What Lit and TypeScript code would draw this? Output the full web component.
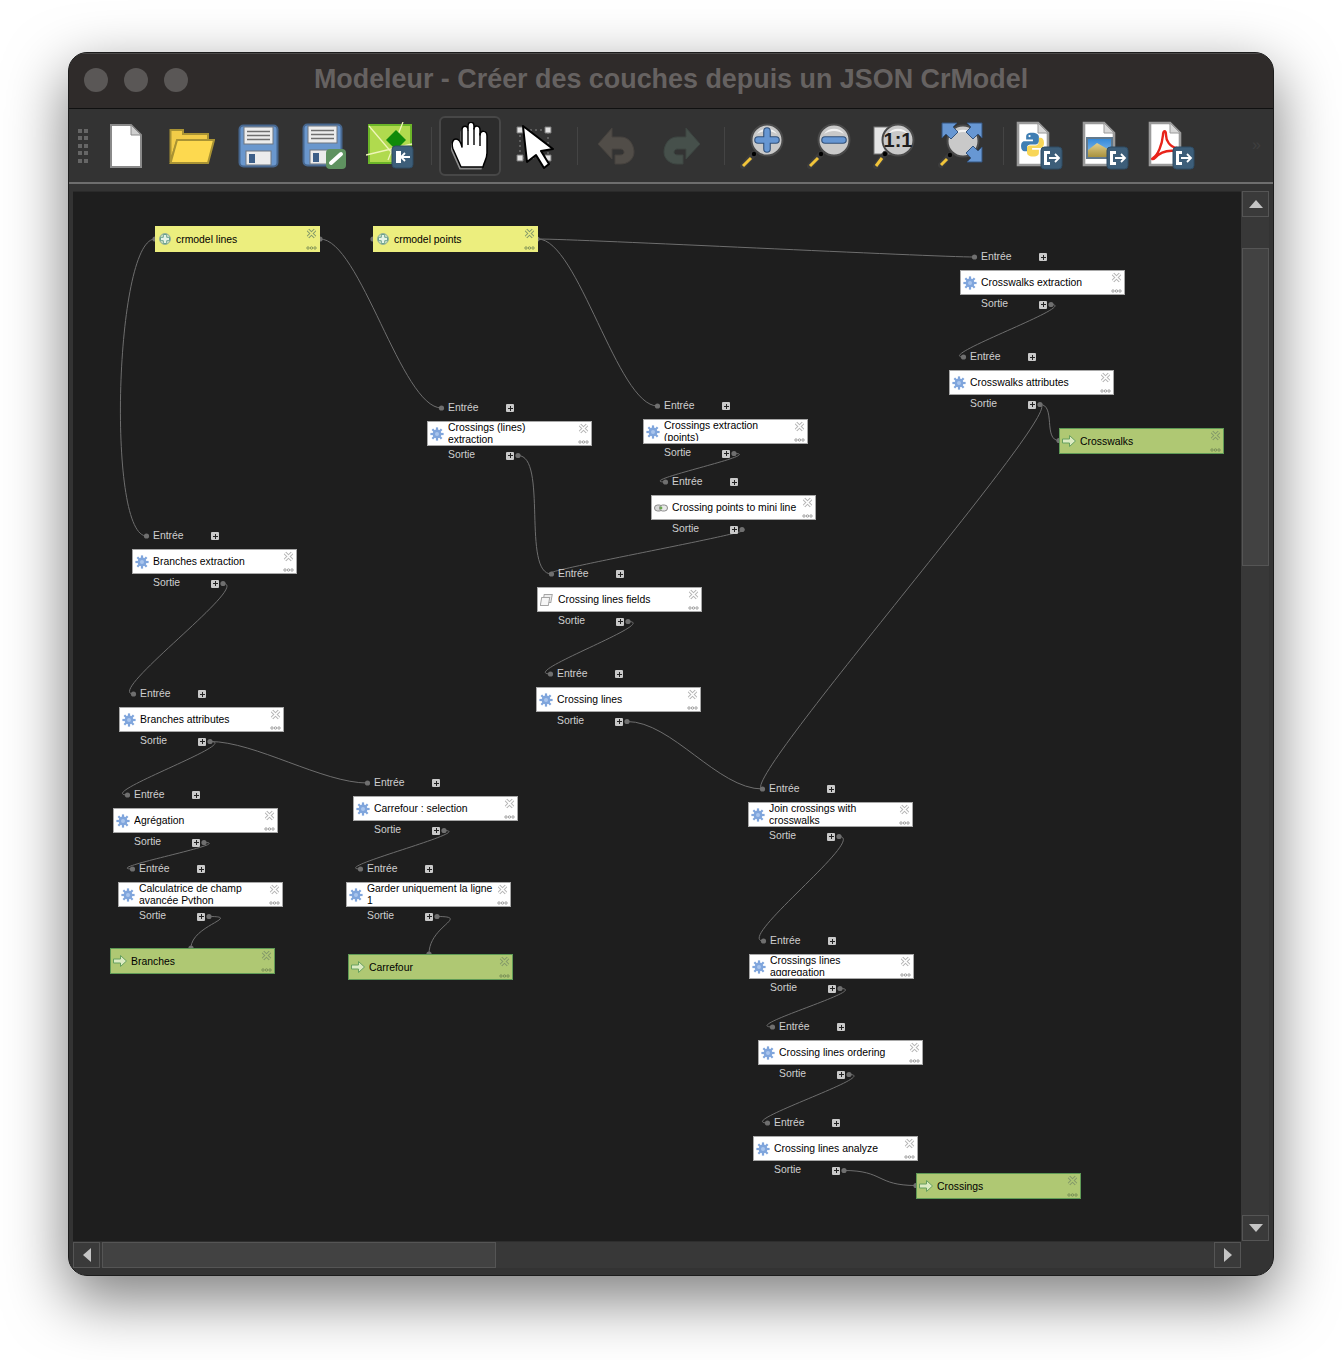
import { LitElement, css, html, svg } from 'lit';
import { customElement } from 'lit/decorators.js';

// canvas origin in page coordinates, node data below is in page coordinates
const OX = 73;
const OY = 192;

type Kind = 'model' | 'input' | 'output';
type Icon = 'gear' | 'plus' | 'arrow' | 'link' | 'fields';

interface GraphNode {
    id: string;
    x: number;
    y: number;
    label: string;
    kind: Kind;
    icon: Icon;
}

const model = (id: string, x: number, y: number, label: string, icon: Icon = 'gear'): GraphNode =>
    ({ id, x, y, label, kind: 'model', icon });

const NODES: GraphNode[] = [
    { id: 'lines', x: 155, y: 226, label: 'crmodel lines', kind: 'input', icon: 'plus' },
    { id: 'points', x: 373, y: 226, label: 'crmodel points', kind: 'input', icon: 'plus' },
    model('cwExt', 960, 270, 'Crosswalks extraction'),
    model('cwAttr', 949, 370, 'Crosswalks attributes'),
    { id: 'cwOut', x: 1059, y: 428, label: 'Crosswalks', kind: 'output', icon: 'arrow' },
    model('clExt', 427, 421, 'Crossings (lines)\nextraction'),
    model('cpExt', 643, 419, 'Crossings extraction\n(points)'),
    model('cpMini', 651, 495, 'Crossing points to mini line', 'link'),
    model('clFields', 537, 587, 'Crossing lines fields', 'fields'),
    model('cl', 536, 687, 'Crossing lines'),
    model('brExt', 132, 549, 'Branches extraction'),
    model('brAttr', 119, 707, 'Branches attributes'),
    model('agg', 113, 808, 'Agrégation'),
    model('carSel', 353, 796, 'Carrefour : selection'),
    model('calc', 118, 882, 'Calculatrice de champ\navancée Python'),
    model('keep', 346, 882, 'Garder uniquement la ligne\n1'),
    { id: 'brOut', x: 110, y: 948, label: 'Branches', kind: 'output', icon: 'arrow' },
    { id: 'carOut', x: 348, y: 954, label: 'Carrefour', kind: 'output', icon: 'arrow' },
    model('join', 748, 802, 'Join crossings with\ncrosswalks'),
    model('clAgg', 749, 954, 'Crossings lines\naggregation'),
    model('clOrd', 758, 1040, 'Crossing lines ordering'),
    model('clAna', 753, 1136, 'Crossing lines analyze'),
    { id: 'crOut', x: 916, y: 1173, label: 'Crossings', kind: 'output', icon: 'arrow' },
];

const byId = new Map(NODES.map((n) => [n.id, n]));
const NODE_W = 165;

type End = 'left' | 'top';

// [from, to, control offset, leave from the left edge, how it ends on a result node]
const LINKS: [string, string, number?, boolean?, End?][] = [
    ['lines', 'brExt', 40, true],
    ['lines', 'clExt', 40],
    ['points', 'cpExt', 40],
    ['points', 'cwExt', 40],
    ['cwExt', 'cwAttr'],
    ['cwAttr', 'cwOut', 16, false, 'left'],
    ['cwAttr', 'join', 30],
    ['clExt', 'clFields'],
    ['cpExt', 'cpMini', 34],
    ['cpMini', 'clFields', 30],
    ['clFields', 'cl', 34],
    ['cl', 'join', 45],
    ['brExt', 'brAttr'],
    ['brAttr', 'agg', 34],
    ['brAttr', 'carSel', 45],
    ['agg', 'calc', 34],
    ['calc', 'brOut', 34, false, 'top'],
    ['carSel', 'keep', 34],
    ['keep', 'carOut', 34, false, 'top'],
    ['join', 'clAgg'],
    ['clAgg', 'clOrd', 34],
    ['clOrd', 'clAna', 34],
    ['clAna', 'crOut', 40, false, 'left'],
];

const IN_DY = -13;
const OUT_DY = 34.5;

function linkPath(fromId: string, toId: string, c = 30, fromLeft = false, end?: End) {
    const a = byId.get(fromId)!;
    const b = byId.get(toId)!;
    const x1 = a.kind === 'input' ? (fromLeft ? a.x : a.x + NODE_W) : a.x + 91;
    const y1 = a.kind === 'input' ? a.y + 13 : a.y + OUT_DY;
    const dir = fromLeft ? -1 : 1;
    if (end === 'top') {
        const tx = b.x + 81;
        return { d: `M${x1} ${y1}C${x1 + c} ${y1} ${tx} ${y1 + 9} ${tx} ${b.y}`, tip: [tx, b.y] };
    }
    const x2 = end === 'left' ? b.x : b.x + 14.5;
    const y2 = end === 'left' ? b.y + 12.5 : b.y + IN_DY;
    return { d: `M${x1} ${y1}C${x1 + c * dir} ${y1} ${x2 - c} ${y2} ${x2} ${y2}`, tip: [x2, y2] };
}

const badge = (x: number, y: number, out: boolean) => svg`
    <rect x=${x} y=${y} width="21" height="22" rx="3.5" fill="#3d5e79" stroke="#2f4b62"/>
    ${out
        ? svg`<path d="M${x + 9} ${y + 5.5}H${x + 4.5}V${y + 16.5}H${x + 9}" fill="none" stroke="#fff" stroke-width="3"/>
              <path d="M${x + 8} ${y + 11}H${x + 18}M${x + 14} ${y + 7}l4 4l-4 4" fill="none" stroke="#fff" stroke-width="1.8"/>`
        : svg`<path d="M${x + 4} ${y + 5}H${x + 9}V${y + 17}H${x + 4}Z" fill="#fff"/>
              <path d="M${x + 18} ${y + 11}H${x + 9}M${x + 13} ${y + 7}l-4 4l4 4" fill="none" stroke="#fff" stroke-width="1.8"/>`}
`;

const floppy = svg`
    <rect x="1.5" y="1.5" width="38" height="41" rx="4" fill="#6a97cd" stroke="#47678f" stroke-width="2"/>
    <rect x="6" y="3" width="29" height="17" fill="#ececec" stroke="#6e7680"/>
    <path d="M9 7.5H32M9 11.5H32M9 15.5H32" stroke="#6f6f6f" stroke-width="1.6"/>
    <rect x="8" y="27" width="25" height="14" fill="#ececec" stroke="#6e7680"/>
    <rect x="11" y="30" width="6" height="9" fill="#3d5f88"/>
`;

const lens = (cx: number, cy: number, inner: unknown = '') => svg`
    <path d="M${cx - 13} ${cy + 14}L5 44" stroke="#3c3c3c" stroke-width="6" stroke-linecap="round"/>
    <path d="M${cx - 16} ${cy + 18}L5 44" stroke="#f2c53a" stroke-width="3"/>
    <circle cx=${cx - 13} cy=${cy + 14} r="2.2" fill="#000"/>
    <circle cx=${cx} cy=${cy} r="15.5" fill="#c9c9c9" stroke="#4a4a4a" stroke-width="2"/>
    <path d="M${cx - 10} ${cy - 6}C${cx - 6} ${cy - 13} ${cx + 6} ${cy - 13} ${cx + 10} ${cy - 6}C${cx + 4} ${cy - 10} ${cx - 4} ${cy - 10} ${cx - 10} ${cy - 6}Z" fill="#f2f2f2"/>
    ${inner}
`;

const exportDoc = (inner: unknown) => svg`
    <path d="M2 2H22L32 12V44H2Z" fill="#fff" stroke="#9a9a9a" stroke-width="2.6"/>
    <path d="M22 2V12H32Z" fill="#d8d8d8" stroke="#9a9a9a"/>
    ${inner}
    ${badge(25, 26, true)}
`;

const TOOLS: Record<string, { w: number; h: number; body: unknown }> = {
    newDoc: {
        w: 32, h: 44,
        body: svg`<path d="M1 1H21L31 11V43H1Z" fill="#fff" stroke="#8a8a8a" stroke-width="2"/>
            <path d="M21 1V11H31Z" fill="#cfcfcf" stroke="#8a8a8a"/>`,
    },
    open: {
        w: 46, h: 36,
        body: svg`<path d="M1.5 34V2H14V6H39V13H8L1.5 34Z" fill="#f2cc48" stroke="#a99334" stroke-width="2"/>
            <path d="M1.5 35L8 12H45L39 35Z" fill="#fdd94f" stroke="#a99334" stroke-width="2"/>`,
    },
    save: { w: 41, h: 44, body: floppy },
    saveAs: {
        w: 44, h: 46,
        body: svg`${floppy}
            <rect x="24" y="26" width="20" height="20" rx="4" fill="#5f9260"/>
            <path d="M29 40L39 31" stroke="#fff" stroke-width="4" stroke-linecap="round"/>`,
    },
    modelImport: {
        w: 48, h: 47,
        body: svg`<rect x="3" y="3" width="42" height="38" fill="#b0da4e" stroke="#6cb628" stroke-width="2"/>
            <path d="M3 4L32 38M37 0L22 38M0 33L46 22" stroke="#eff5b8" stroke-width="1.3" fill="none"/>
            <path d="M30 8L40 18L30 28L20 18Z" fill="#0f8a0a"/>
            ${badge(26, 24, false)}`,
    },
    pan: {
        w: 38, h: 48,
        body: svg`<path d="M10 45L2 27C0 21 2 17 5 17C8 17 10 21 11 25V8C11 3 17 3 17 8V4C17 -1 23 -1 23 4V7C23 3 29 3 29 8V13C29 8 36 8 36 14V31C36 37 33 40 32 45Z"
                fill="#8c8c8c" transform="translate(-1.5 2.5)"/>
            <path d="M10 45L2 27C0 21 2 17 5 17C8 17 10 21 11 25V8C11 3 17 3 17 8V4C17 -1 23 -1 23 4V7C23 3 29 3 29 8V13C29 8 36 8 36 14V31C36 37 33 40 32 45Z"
                fill="#fff" stroke="#000" stroke-width="1.5" stroke-linejoin="round"/>
            <path d="M17 8V23M23 6V23M29 11V24" stroke="#000" stroke-width="1.4"/>`,
    },
    select: {
        w: 38, h: 46,
        body: svg`<rect x="4" y="7" width="28" height="28" fill="none" stroke="#8a8a8a" stroke-dasharray="2 3"/>
            <path d="M1 4h6v6H1zM29 4h6v6h-6zM1 32h6v6H1zM29 32h6v6h-6z" fill="#e2e2e2" stroke="#777"/>
            <path d="M7 3L37 26L25 28L33 41L28 45L20 32L11 39Z" fill="#fff" stroke="#000" stroke-width="2" stroke-linejoin="round"/>`,
    },
    undo: {
        w: 38, h: 38,
        body: svg`<path d="M1 17L15 1V10H24C33 10 37 19 37 25C37 32 31 37 24 37H18V28H23C27 28 28 25 26 23C25 22 24 22 22 22H15V32Z" fill="#514d48" stroke="#47433f"/>`,
    },
    redo: {
        w: 38, h: 38,
        body: svg`<path d="M37 17L23 1V10H14C5 10 1 19 1 25C1 32 7 37 14 37H20V28H15C11 28 10 25 12 23C13 22 14 22 16 22H23V32Z" fill="#46504b" stroke="#3e4743"/>`,
    },
    zoomIn: {
        w: 46, h: 48,
        body: lens(29, 18, svg`<path d="M20 18H38M29 9V27" stroke="#2f4f78" stroke-width="7.6" stroke-linecap="round"/>
            <path d="M20 18H38M29 9V27" stroke="#6797d3" stroke-width="5.4" stroke-linecap="round"/>`),
    },
    zoomOut: {
        w: 46, h: 48,
        body: lens(29, 18, svg`<path d="M20 18H38" stroke="#2f4f78" stroke-width="7.6" stroke-linecap="round"/>
            <path d="M20 18H38" stroke="#6797d3" stroke-width="5.4" stroke-linecap="round"/>`),
    },
    zoomActual: {
        w: 46, h: 48,
        body: svg`<rect x="3" y="5" width="22" height="27" fill="#e4e4e4" stroke="#777"/>
            ${lens(27, 18, svg`<text x="27" y="25" text-anchor="middle" font-family="Liberation Sans, sans-serif" font-size="20" font-weight="700" fill="#1d1d1d">1:1</text>`)}`,
    },
    zoomFull: {
        w: 48, h: 50,
        body: svg`${lens(27, 20)}
            <g fill="#6797d3" stroke="#35557e">
                <path d="M6 2H21L17 6L22 11L15 18L10 13L6 17Z"/>
                <path d="M46 2H31L35 6L30 11L37 18L42 13L46 17Z"/>
                <path d="M46 41H31L35 37L30 32L37 25L42 30L46 26Z"/>
            </g>`,
    },
    exportPy: {
        w: 47, h: 49,
        body: exportDoc(svg`<g transform="translate(2.5 4) scale(.85)">
            <path d="M16 9C10 9 9 11 9 14V17H17V19H7C4 19 3 22 3 25C3 29 5 31 7 31H10V27C10 24 12 23 14 23H20C22 23 24 21 24 19V14C24 11 21 9 16 9Z" fill="#3f7eb3"/>
            <path d="M17 37C23 37 24 35 24 32V29H16V27H26C29 27 30 24 30 21C30 17 28 15 26 15H24V19C24 22 22 24 20 24H13C11 24 10 25 10 27V32C10 35 12 37 17 37Z" fill="#f8d658"/>
            <circle cx="13" cy="13" r="1.3" fill="#fff"/>
        </g>`),
    },
    exportImg: {
        w: 47, h: 49,
        body: exportDoc(svg`
            <defs>
                <linearGradient id="sky" x1="0" y1="0" x2="0" y2="1"><stop offset="0" stop-color="#2f86d8"/><stop offset="1" stop-color="#9cc9ee"/></linearGradient>
                <linearGradient id="hill" x1="0" y1="0" x2="0" y2="1"><stop offset="0" stop-color="#e2cf8c"/><stop offset="1" stop-color="#a8923f"/></linearGradient>
            </defs>
            <rect x="5" y="17" width="25" height="20" fill="url(#sky)" stroke="#62798c" stroke-width="2"/>
            <path d="M6 29L15 22L29 30V36H6Z" fill="url(#hill)"/>`),
    },
    exportPdf: {
        w: 47, h: 49,
        body: exportDoc(svg`
            <path d="M5 37C10 34 14 24 15 14C15 9 18 9 18 14C18 20 22 26 29 27C32 27 32 30 28 30C20 29 12 31 7 37C5 39 3 38 5 37Z"
                fill="none" stroke="#e8231a" stroke-width="2.4"/>`),
    },
};

const tool = (name: string, cls = '') => {
    const t = TOOLS[name];
    return html`<div class="tool ${cls}">
        <svg width=${t.w} height=${t.h} viewBox="0 0 ${t.w} ${t.h}">${t.body}</svg>
    </div>`;
};

const GEAR_SPOKES = [0, 45, 90, 135];

const nodeIcon = (icon: Icon) => {
    switch (icon) {
        case 'gear':
            return svg`${GEAR_SPOKES.map((a) => svg`<rect x="5.9" y="0.4" width="2.2" height="13.2" fill="#7fa5dc" transform="rotate(${a} 7 7)"/>`)}
                <circle cx="7" cy="7" r="4.4" fill="#7fa5dc"/><circle cx="7" cy="7" r="2" fill="#a9c5ec"/>`;
        case 'plus':
            return svg`<circle cx="7" cy="7" r="5.4" fill="#dbe8cf" stroke="#86a596"/>
                <path d="M5.3 2.5H8.7V5.3H11.5V8.7H8.7V11.5H5.3V8.7H2.5V5.3H5.3Z" fill="#e6f3e6" stroke="#5f9a84" stroke-width=".9"/>`;
        case 'arrow':
            return svg`<path d="M0.5 5H7.5V1.5L13.5 7L7.5 12.5V9H0.5Z" fill="#dcebc2" stroke="#67a05f"/>`;
        case 'link':
            return svg`<rect x="0.5" y="4" width="8" height="6" rx="3" fill="#d7d7d7" stroke="#8b8b8b"/>
                <rect x="5.5" y="4" width="8" height="6" rx="3" fill="#e8e8e8" stroke="#8b8b8b"/>
                <circle cx="7" cy="7" r="1.4" fill="#6aa84f"/>`;
        case 'fields':
            return svg`<rect x="4.5" y="1.5" width="8" height="8" fill="#eee" stroke="#a5a5a5" transform="skewX(-10)"/>
                <rect x="2.5" y="4.5" width="8" height="8" fill="#f6f6f6" stroke="#a5a5a5" transform="skewX(-10)"/>`;
    }
};

@customElement('app-root')
export class AppRoot extends LitElement {
    static styles = css`
        :host {
            display: block;
            height: 1360px;
            padding: 52px 68px 0;
            box-sizing: border-box;
            background: #fff;
            font-family: 'Liberation Sans', Arial, sans-serif;
        }

        .window {
            height: 1224px;
            box-sizing: border-box;
            display: flex;
            flex-direction: column;
            background: #333;
            border: 1px solid #1c1c1c;
            border-radius: 19px;
            overflow: hidden;
        }

        .shadow {
            border-radius: 19px;
            box-shadow: 0 22px 60px 2px rgba(0, 0, 0, 0.5);
        }

        .titlebar {
            height: 56px;
            flex: none;
            position: relative;
            display: flex;
            align-items: center;
            justify-content: center;
            background: #2f2b2a;
            border-top: 1px solid #4c4a49;
            border-bottom: 1px solid #101010;
            box-sizing: border-box;
        }

        .lights {
            position: absolute;
            left: 15px;
            top: 14px;
            display: flex;
            gap: 16px;
        }

        .lights span {
            width: 24px;
            height: 24px;
            border-radius: 50%;
            background: #5a5756;
        }

        .title {
            font-size: 26.9px;
            font-weight: 700;
            color: #666261;
            white-space: nowrap;
            margin-top: -3px;
        }

        .toolbar {
            height: 75px;
            flex: none;
            display: flex;
            align-items: center;
            padding-left: 9px;
            box-sizing: border-box;
            background: #333;
            border-bottom: 2px solid #6e6e6e;
            position: relative;
        }

        .handle {
            display: grid;
            grid-template-columns: repeat(2, 4px);
            grid-auto-rows: 4px;
            gap: 3.5px 2px;
            width: 15px;
        }

        .handle span {
            background: #666;
        }

        .tool {
            width: 66px;
            height: 60px;
            flex: none;
            display: flex;
            align-items: center;
            justify-content: center;
            box-sizing: border-box;
        }

        .tool.active {
            width: 62px;
            margin: 0 1px 0 2px;
            background: #2c2c2c;
            border: 2px solid #474747;
            border-radius: 6px;
        }

        .tool.zoom {
            width: 66.4px;
        }

        .sep {
            width: 1px;
            height: 38px;
            flex: none;
            margin: 0 5px 0 9px;
            background: #444;
        }

        .sep.first {
            margin-left: 8px;
        }

        .sep.tight {
            margin-right: 3px;
        }

        .more {
            position: absolute;
            left: 1183px;
            top: 27px;
            color: #3f3f3f;
            font-size: 16px;
        }

        .body {
            flex: 1;
            display: grid;
            grid-template-columns: 1168px 28px;
            grid-template-rows: 1050px 27px;
            padding: 7px 0 0 4px;
        }

        .canvas {
            position: relative;
            background: #1e1e1e;
            overflow: hidden;
            border-top: 1px solid #2a2a2a;
        }

        .links {
            position: absolute;
            left: 0;
            top: 0;
        }

        .node {
            position: absolute;
            width: 165px;
            height: 25px;
            box-sizing: border-box;
            border: 1px solid #a8a8a8;
            background: #fff;
            color: #000;
            font-size: 10.4px;
        }

        .node.input {
            background: #ecee7e;
            border-color: #ecee7e;
            height: 26px;
        }

        .node.output {
            background: #afc873;
            border-color: #5f9a56;
            height: 26px;
        }

        .node-icon {
            position: absolute;
            left: 2px;
            top: 5px;
        }

        .label {
            position: absolute;
            left: 20px;
            top: -1px;
            width: 132px;
            height: 25px;
            display: flex;
            align-items: center;
            line-height: 12px;
            white-space: pre-line;
            clip-path: inset(0 0 3px 0);
        }

        .node.input .label,
        .node.output .label {
            top: 0;
        }

        .close {
            position: absolute;
            right: 2px;
            top: 1px;
        }

        .dots {
            position: absolute;
            right: 2px;
            bottom: 1px;
        }

        .port {
            position: absolute;
            left: 20px;
            color: #cfcfcf;
            font-size: 10.4px;
            line-height: 12px;
        }

        .port.in {
            top: -20px;
        }

        .port.out {
            top: 27px;
        }

        .plus {
            position: absolute;
            left: 78px;
            width: 8px;
            height: 8px;
            background: #c9c9c9;
            border-radius: 1px;
        }

        .plus::before,
        .plus::after {
            content: '';
            position: absolute;
            background: #222;
        }

        .plus::before {
            left: 1.5px;
            top: 3.5px;
            width: 5px;
            height: 1px;
        }

        .plus::after {
            left: 3.5px;
            top: 1.5px;
            width: 1px;
            height: 5px;
        }

        .plus.in {
            top: -18px;
        }

        .plus.out {
            top: 29.5px;
        }

        .vscroll {
            display: flex;
            flex-direction: column;
            background: #383838;
        }

        .hscroll {
            display: flex;
            background: #383838;
            border-top: 1px solid #2e2e2e;
        }

        .sbtn {
            width: 27px;
            height: 26px;
            flex: none;
            display: flex;
            align-items: center;
            justify-content: center;
            box-sizing: border-box;
            background: #3a3a3a;
            border: 1px solid #555;
        }

        .vscroll .sbtn:first-child {
            margin-left: 1px;
        }

        .vscroll .sbtn:last-child {
            margin-left: 1px;
            margin-top: auto;
        }

        .vthumb {
            height: 318px;
            margin: 31px 0 0 1px;
            width: 27px;
            box-sizing: border-box;
            background: #424242;
            border: 1px solid #555;
        }

        .hthumb {
            width: 394px;
            margin-left: 2px;
            box-sizing: border-box;
            background: #424242;
            border: 1px solid #555;
        }

        .hscroll .sbtn:last-child {
            margin-left: auto;
        }

        .corner {
            background: #333;
        }
    `;

    renderNode(n: GraphNode) {
        const inner = n.kind === 'model' ? '#fff' : n.kind === 'input' ? '#ecee7e' : '#afc873';
        const edge = n.kind === 'model' ? '#b5b5b5' : '#84996a';
        return html`<div class="node ${n.kind}" style="left:${n.x - OX}px;top:${n.y - OY}px">
            <svg class="node-icon" width="14" height="14" viewBox="0 0 14 14">${nodeIcon(n.icon)}</svg>
            <div class="label">${n.label}</div>
            <svg class="close" width="11" height="11" viewBox="0 0 11 11">
                <path d="M2 2L9 9M9 2L2 9" stroke=${edge} stroke-width="3.4"/>
                <path d="M2 2L9 9M9 2L2 9" stroke=${inner} stroke-width="1.6"/>
            </svg>
            <svg class="dots" width="11" height="4" viewBox="0 0 11 4">
                <g fill="none" stroke=${edge === '#b5b5b5' ? '#8c8c8c' : '#6f8452'} stroke-width=".8">
                    <circle cx="2" cy="2" r="1.2"/><circle cx="5.5" cy="2" r="1.2"/><circle cx="9" cy="2" r="1.2"/>
                </g>
            </svg>
            ${n.kind === 'model'
                ? html`<span class="port in">Entrée</span><span class="plus in"></span>
                       <span class="port out">Sortie</span><span class="plus out"></span>`
                : ''}
        </div>`;
    }

    render() {
        const links = LINKS.map(([a, b, c, left, end]) => ({ ...linkPath(a, b, c, left, end), end }));
        const models = NODES.filter((n) => n.kind === 'model');
        return html`
            <div class="shadow">
                <div class="window">
                    <div class="titlebar">
                        <div class="lights"><span></span><span></span><span></span></div>
                        <div class="title">Modeleur - Créer des couches depuis un JSON CrModel</div>
                    </div>
                    <div class="toolbar">
                        <div class="handle">${Array.from({ length: 10 }, () => html`<span></span>`)}</div>
                        ${tool('newDoc')}${tool('open')}${tool('save')}${tool('saveAs')}${tool('modelImport')}
                        <div class="sep first"></div>
                        ${tool('pan', 'active')}${tool('select')}
                        <div class="sep"></div>
                        ${tool('undo')}${tool('redo')}
                        <div class="sep tight"></div>
                        ${tool('zoomIn', 'zoom')}${tool('zoomOut', 'zoom')}${tool('zoomActual', 'zoom')}${tool('zoomFull', 'zoom')}
                        <div class="sep tight"></div>
                        ${tool('exportPy')}${tool('exportImg')}${tool('exportPdf')}
                        <span class="more">»</span>
                    </div>
                    <div class="body">
                        <div class="canvas">
                            <svg class="links" width="1168" height="1050" viewBox="${OX} ${OY} 1168 1050">
                                <g fill="none" stroke="#6e6e6e" stroke-width="1">
                                    ${links.map((l) => svg`<path d=${l.d}/>`)}
                                </g>
                                <g fill="#6f6f6f">
                                    ${models.map((n) => svg`<circle cx=${n.x + 14.5} cy=${n.y + IN_DY} r="2.6"/>
                                        <circle cx=${n.x + 91} cy=${n.y + OUT_DY} r="2.6"/>`)}
                                    ${links.filter((l) => l.end).map((l) => svg`<circle cx=${l.tip[0]} cy=${l.tip[1]} r="2.6"/>`)}
                                    <circle cx="155" cy="239" r="2.6"/><circle cx="320" cy="239" r="2.6"/>
                                    <circle cx="373" cy="239" r="2.6"/><circle cx="537" cy="239" r="2.6"/>
                                </g>
                            </svg>
                            ${NODES.map((n) => this.renderNode(n))}
                        </div>
                        <div class="vscroll">
                            <div class="sbtn"><svg width="16" height="10" viewBox="0 0 16 10"><path d="M8 1L15 9H1Z" fill="#c4c4c4"/></svg></div>
                            <div class="vthumb"></div>
                            <div class="sbtn"><svg width="16" height="10" viewBox="0 0 16 10"><path d="M8 9L15 1H1Z" fill="#c4c4c4"/></svg></div>
                        </div>
                        <div class="hscroll">
                            <div class="sbtn"><svg width="10" height="16" viewBox="0 0 10 16"><path d="M1 8L9 1V15Z" fill="#c4c4c4"/></svg></div>
                            <div class="hthumb"></div>
                            <div class="sbtn"><svg width="10" height="16" viewBox="0 0 10 16"><path d="M9 8L1 1V15Z" fill="#c4c4c4"/></svg></div>
                        </div>
                        <div class="corner"></div>
                    </div>
                </div>
            </div>
        `;
    }
}
